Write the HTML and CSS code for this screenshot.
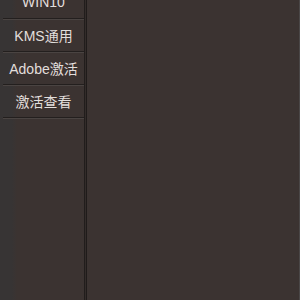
FILE: index.html
```html
<!DOCTYPE html>
<html lang="zh-CN">
<head>
<meta charset="utf-8">
<link rel="stylesheet" href="styles.css">
</head>
<body>
<div class="page">
  <nav class="sidebar">
    <ul class="menu">
      <li class="item">WIN10</li>
      <li class="item">KMS通用</li>
      <li class="item">Adobe激活</li>
      <li class="item">激活查看</li>
    </ul>
  </nav>
  <main class="content"></main>
  <div class="edge"></div>
</div>
</body>
</html>
```
FILE: styles.css
```css
html, body {
  margin: 0;
  padding: 0;
  height: 100%;
  overflow: hidden;
  background: #3b3331;
}
.page {
  display: flex;
  height: 300px;
}
.sidebar {
  width: 81px;
  padding-left: 3px;
  background: linear-gradient(to right, #373434 0, #373434 12px, #3b3331 17px);
  border-right: 1px solid #211d1c;
  box-shadow: 1px 0 0 #332c2a, 2px 0 0 #1f1b1a;
}
.menu {
  list-style: none;
  margin: -14px 0 0 0;
  padding: 0;
}
.item {
  height: 32px;
  border-bottom: 1px solid #231f1e;
  box-shadow: 0 1px 0 #4a4442;
  display: flex;
  align-items: center;
  justify-content: center;
  font-family: "Liberation Sans", "Noto Sans CJK SC", sans-serif;
  font-size: 14px;
  color: #e2dedc;
  white-space: nowrap;
}
.content {
  flex: 1;
  margin-left: 2px;
  background: #3b3331;
}
.edge {
  width: 1px;
  background: #4a4747;
}
```
